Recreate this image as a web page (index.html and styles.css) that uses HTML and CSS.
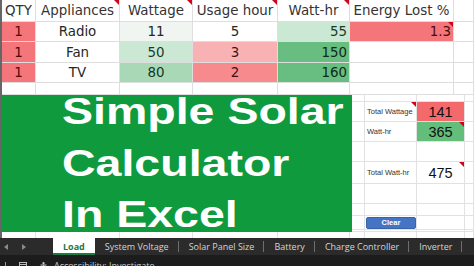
FILE: index.html
```html
<!DOCTYPE html>
<html lang="en">
<head>
    <meta charset="UTF-8">
    <meta name="viewport" content="width=device-width, initial-scale=1.0">
    <title>Simple Solar Calculator In Excel</title>
    <link rel="stylesheet" href="styles.css">
</head>
<body>
    <div class="sheet">
        <!-- Tabel beban -->
        <div class="load-table">
            <div class="cell head">QTY</div>
            <div class="cell head note">Appliances</div>
            <div class="cell head note">Wattage</div>
            <div class="cell head note">Usage hour</div>
            <div class="cell head note">Watt-hr</div>
            <div class="cell head">Energy Lost %</div>
            <div class="cell"></div>

            <div class="cell red">1</div>
            <div class="cell">Radio</div>
            <div class="cell pale">11</div>
            <div class="cell">5</div>
            <div class="cell green-soft right">55</div>
            <div class="cell red right note">1.3</div>
            <div class="cell"></div>

            <div class="cell red">1</div>
            <div class="cell">Fan</div>
            <div class="cell green-soft">50</div>
            <div class="cell red-soft">3</div>
            <div class="cell green right">150</div>
            <div class="cell"></div>
            <div class="cell"></div>

            <div class="cell red">1</div>
            <div class="cell">TV</div>
            <div class="cell green-mid">80</div>
            <div class="cell red-mid">2</div>
            <div class="cell green right">160</div>
            <div class="cell"></div>
            <div class="cell"></div>

            <div class="cell"></div>
            <div class="cell"></div>
            <div class="cell"></div>
            <div class="cell"></div>
            <div class="cell"></div>
            <div class="cell"></div>
            <div class="cell"></div>
        </div>

        <div class="middle">
            <div class="banner">
                <h1 class="banner-title">Simple Solar<br>Calculator<br>In Excel</h1>
            </div>

            <!-- Ringkasan total -->
            <div class="summary">
                <div class="sc"></div><div class="sc"></div><div class="sc"></div><div class="sc"></div>

                <div class="sc"></div>
                <div class="sc label note">Total Wattage</div>
                <div class="sc total red-total">141</div>
                <div class="sc"></div>

                <div class="sc"></div>
                <div class="sc label">Watt-hr</div>
                <div class="sc total green-total note">365</div>
                <div class="sc"></div>

                <div class="sc"></div><div class="sc"></div><div class="sc"></div><div class="sc"></div>

                <div class="sc"></div>
                <div class="sc label">Total Watt-hr</div>
                <div class="sc total note">475</div>
                <div class="sc"></div>

                <div class="sc"></div><div class="sc"></div><div class="sc"></div><div class="sc"></div>
                <div class="sc"></div><div class="sc"></div><div class="sc"></div><div class="sc"></div>

                <div class="sc"></div>
                <div class="sc btn-cell"><button class="clear-btn">Clear</button></div>
                <div class="sc"></div>
                <div class="sc"></div>

                <div class="sc"></div><div class="sc"></div><div class="sc"></div><div class="sc"></div>
            </div>
        </div>

        <div class="gap-row">
            <div></div><div></div><div></div><div></div><div></div><div></div><div></div><div></div><div></div>
        </div>
    </div>

    <!-- Tab sheet -->
    <div class="tabs">
        <div class="tab-nav">
            <svg width="4" height="6" viewBox="0 0 4 6"><path d="M4 0 L0 3 L4 6 Z" fill="#8a8a8a"/></svg>
            <svg width="4" height="6" viewBox="0 0 4 6"><path d="M0 0 L4 3 L0 6 Z" fill="#8a8a8a"/></svg>
        </div>
        <div class="tab active">Load</div>
        <div class="tab">System Voltage</div>
        <div class="tab">Solar Panel Size</div>
        <div class="tab">Battery</div>
        <div class="tab">Charge Controller</div>
        <div class="tab">Inverter</div>
    </div>

    <div class="status">
        <span class="status-mark"></span>
        <svg class="status-icon" width="8" height="7" viewBox="0 0 8 7"><rect x="0.5" y="0.5" width="7" height="6" fill="none" stroke="#bbb"/><path d="M0 2.5 H8" stroke="#bbb"/></svg>
        <svg class="status-icon" width="7" height="7" viewBox="0 0 7 7"><circle cx="3.5" cy="1.2" r="1.1" fill="#ccc"/><path d="M0.5 3 H6.5 M3.5 3 V7" stroke="#ccc" stroke-width="1.2"/></svg>
        <span class="status-text">Accessibility: Investigate</span>
    </div>
</body>
</html>
```

FILE: styles.css
```css
body {
    margin: 0;
    width: 474px;
    height: 266px;
    overflow: hidden;
    background: #fff;
    font-family: "DejaVu Sans", sans-serif;
}

.sheet {
    height: 238px;
    border-left: 2px solid #666;
    display: flex;
    flex-direction: column;
}

/* Tabel beban */
.load-table {
    display: grid;
    grid-template-columns: 34px 84px 73px 85px 72px 104px 20px;
    grid-template-rows: 22px 20px 21px 20px 12px;
    font-size: 13.4px;
    color: #262626;
}
.cell {
    position: relative;
    box-sizing: border-box;
    display: flex;
    align-items: center;
    justify-content: center;
    border-right: 1px solid #dedede;
    border-bottom: 1px solid #dedede;
    white-space: nowrap;
}
.cell.head {
    color: #333;
}
.cell.right {
    justify-content: flex-end;
    padding-right: 2px;
}
.red { background: #f5767a; color: #4a0c0e; }
.red-soft { background: #f9b2b4; color: #3e1414; }
.red-mid { background: #f68a8d; color: #3e1010; }
.pale { background: #f0f5f2; }
.green-soft { background: #cbe8d4; color: #1b3a24; }
.green-mid { background: #a9d8b6; color: #15351e; }
.green { background: #68bd80; color: #0f2b17; }

/* Segitiga merah penanda komentar */
.note::after {
    content: "";
    position: absolute;
    top: 0;
    right: 0;
    border-top: 5px solid #d0021b;
    border-left: 5px solid transparent;
}

.middle {
    display: flex;
    height: 137px;
}

.banner {
    width: 350px;
    background: #0f9a3d;
}
.banner-title {
    display: inline-block;
    margin: -9px 0 0 60px;
    font: bold 37.5px/51.5px "Liberation Sans", Arial, sans-serif;
    color: #fff;
    white-space: nowrap;
    transform: scaleX(1.24);
    transform-origin: left top;
}

/* Ringkasan total */
.summary {
    flex: 1;
    display: grid;
    grid-template-columns: 13px 52px 48px 9px;
    grid-template-rows: 7px 20px 20px 20px 22px 20px 12px 14px 2px;
}
.sc {
    position: relative;
    box-sizing: border-box;
    border-right: 1px solid #e2e2e2;
    border-bottom: 1px solid #e2e2e2;
    display: flex;
    align-items: center;
    justify-content: center;
}
.sc.label {
    justify-content: flex-start;
    padding-left: 2px;
    font: 7.5px "Liberation Sans", Arial, sans-serif;
    color: #333;
    white-space: nowrap;
}
.sc.total {
    font: 14.5px "Liberation Sans", Arial, sans-serif;
    color: #111;
}
.red-total { background: #f4696c; }
.green-total { background: #63be7b; }

.btn-cell {
    padding: 1px 0 1px 1px;
}
.clear-btn {
    width: 100%;
    height: 12px;
    padding: 0;
    border: 1px solid #3a62a8;
    border-radius: 2px;
    background: #4674c5;
    color: #fff;
    font: bold 7.5px "Liberation Sans", Arial, sans-serif;
}

.gap-row {
    flex: 1;
    display: grid;
    grid-template-columns: 34px 84px 73px 85px 72px 15px 52px 48px 9px;
}
.gap-row div {
    border-right: 1px solid #e2e2e2;
}

/* Tab sheet */
.tabs {
    height: 17px;
    display: flex;
    background: #2b2b2b;
    color: #d4d4d4;
    font: 9px "Open Sans", sans-serif;
}
.tab-nav {
    width: 53px;
    display: flex;
    align-items: center;
    gap: 14px;
    padding-left: 4px;
    box-sizing: border-box;
}
.tab {
    position: relative;
    display: flex;
    align-items: center;
    padding: 0 10px;
    white-space: nowrap;
}
.tab::after {
    content: "";
    position: absolute;
    right: 0;
    top: 3px;
    width: 1px;
    height: 11px;
    background: #6e6e6e;
}
.tab.active {
    background: #fff;
    color: #1d7a43;
    font-weight: bold;
    box-shadow: inset 0 -2px #1d7a43;
}
.tab.active::after {
    display: none;
}

.status {
    height: 11px;
    overflow: hidden;
    display: flex;
    align-items: flex-start;
    gap: 13px;
    padding: 5px 0 0 5px;
    box-sizing: border-box;
    background: #1c1c1c;
    color: #c8c8c8;
    font: 9px/11px "Open Sans", sans-serif;
}
.status-mark {
    width: 1px;
    height: 6px;
    margin-top: 2px;
    background: #999;
}
.status-icon {
    margin-top: 2px;
}
.status-text {
    margin-left: -6px;
}
```
